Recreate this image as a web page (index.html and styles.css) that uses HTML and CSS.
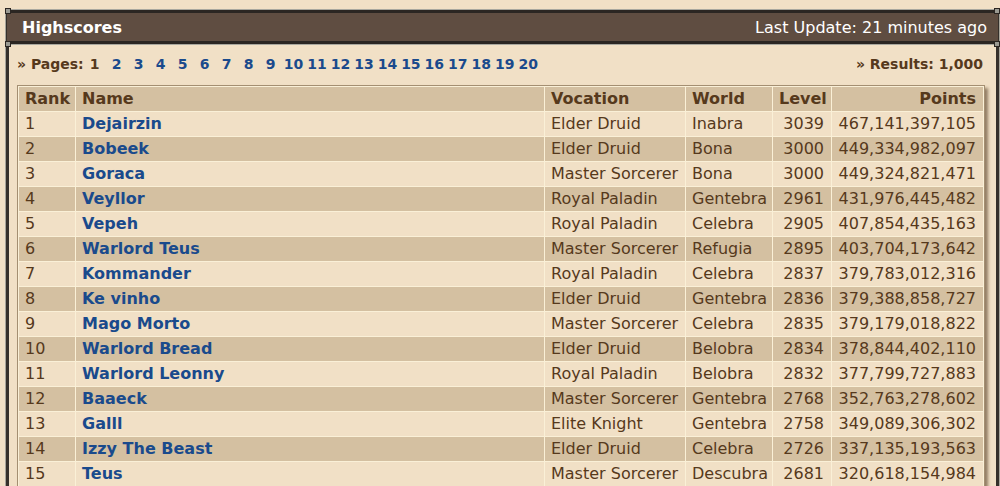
FILE: index.html
```html
<!DOCTYPE html>
<html>
<head>
<meta charset="utf-8">
<title>Highscores</title>
<link rel="stylesheet" href="styles.css">
</head>
<body>
<div class="box">
  <div class="hdr">
    <span class="nub nub-tl"></span><span class="nub nub-bl"></span>
    <span class="nub nub-tr"></span><span class="nub nub-br"></span>
    <div class="hdr-in">
      <span class="hdr-title">Highscores</span>
      <span class="hdr-upd">Last Update: 21 minutes ago</span>
    </div>
  </div>
  <div class="content">
    <div class="pager">
      <div class="pages">
        <span class="lbl">» Pages:</span>
        <span class="pg cur">1</span>
        <a class="pg">2</a><a class="pg">3</a><a class="pg">4</a><a class="pg">5</a><a class="pg">6</a><a class="pg">7</a><a class="pg">8</a><a class="pg">9</a><a class="pg">10</a><a class="pg">11</a><a class="pg">12</a><a class="pg">13</a><a class="pg">14</a><a class="pg">15</a><a class="pg">16</a><a class="pg">17</a><a class="pg">18</a><a class="pg">19</a><a class="pg">20</a>
      </div>
      <div class="results">» Results: 1,000</div>
    </div>
    <div class="tablewrap">
      <table class="hs">
        <colgroup>
          <col class="c-rank"><col class="c-name"><col class="c-voc"><col class="c-world"><col class="c-level"><col class="c-points">
        </colgroup>
        <thead>
          <tr><th>Rank</th><th>Name</th><th>Vocation</th><th>World</th><th class="r">Level</th><th class="r">Points</th></tr>
        </thead>
        <tbody>
          <tr><td>1</td><td><a>Dejairzin</a></td><td>Elder Druid</td><td>Inabra</td><td class="r">3039</td><td class="r">467,141,397,105</td></tr>
          <tr><td>2</td><td><a>Bobeek</a></td><td>Elder Druid</td><td>Bona</td><td class="r">3000</td><td class="r">449,334,982,097</td></tr>
          <tr><td>3</td><td><a>Goraca</a></td><td>Master Sorcerer</td><td>Bona</td><td class="r">3000</td><td class="r">449,324,821,471</td></tr>
          <tr><td>4</td><td><a>Veyllor</a></td><td>Royal Paladin</td><td>Gentebra</td><td class="r">2961</td><td class="r">431,976,445,482</td></tr>
          <tr><td>5</td><td><a>Vepeh</a></td><td>Royal Paladin</td><td>Celebra</td><td class="r">2905</td><td class="r">407,854,435,163</td></tr>
          <tr><td>6</td><td><a>Warlord Teus</a></td><td>Master Sorcerer</td><td>Refugia</td><td class="r">2895</td><td class="r">403,704,173,642</td></tr>
          <tr><td>7</td><td><a>Kommander</a></td><td>Royal Paladin</td><td>Celebra</td><td class="r">2837</td><td class="r">379,783,012,316</td></tr>
          <tr><td>8</td><td><a>Ke vinho</a></td><td>Elder Druid</td><td>Gentebra</td><td class="r">2836</td><td class="r">379,388,858,727</td></tr>
          <tr><td>9</td><td><a>Mago Morto</a></td><td>Master Sorcerer</td><td>Celebra</td><td class="r">2835</td><td class="r">379,179,018,822</td></tr>
          <tr><td>10</td><td><a>Warlord Bread</a></td><td>Elder Druid</td><td>Belobra</td><td class="r">2834</td><td class="r">378,844,402,110</td></tr>
          <tr><td>11</td><td><a>Warlord Leonny</a></td><td>Royal Paladin</td><td>Belobra</td><td class="r">2832</td><td class="r">377,799,727,883</td></tr>
          <tr><td>12</td><td><a>Baaeck</a></td><td>Master Sorcerer</td><td>Gentebra</td><td class="r">2768</td><td class="r">352,763,278,602</td></tr>
          <tr><td>13</td><td><a>Galll</a></td><td>Elite Knight</td><td>Gentebra</td><td class="r">2758</td><td class="r">349,089,306,302</td></tr>
          <tr><td>14</td><td><a>Izzy The Beast</a></td><td>Elder Druid</td><td>Celebra</td><td class="r">2726</td><td class="r">337,135,193,563</td></tr>
          <tr><td>15</td><td><a>Teus</a></td><td>Master Sorcerer</td><td>Descubra</td><td class="r">2681</td><td class="r">320,618,154,984</td></tr>
        </tbody>
      </table>
    </div>
  </div>
</div>
</body>
</html>
```

FILE: styles.css
```css
html, body {
  margin: 0;
  padding: 0;
  overflow: hidden;
  background: #f1e0c6;
  font-family: "DejaVu Sans", Verdana, sans-serif;
  color: #56391c;
}

.box {
  margin: 9px 1px 0 6px;
  border-left: 3px solid #35302b;
  border-right: 3px solid #35302b;
  box-shadow: -1px 0 0 #a7a49a, 1px 0 0 #a7a49a;
  min-height: 600px;
  background: #f1e0c6;
}

.hdr {
  position: relative;
  margin: 0 -2px;
  border-top: 1px solid #a9a89f;
  border-bottom: 1px solid #a9a89f;
}

.hdr-in {
  display: flex;
  justify-content: space-between;
  align-items: center;
  height: 28px;
  padding: 0 11px 0 15px;
  border-top: 3px solid #2b2622;
  border-bottom: 3px solid #2b2622;
  background: #5f4d41;
  color: #ffffff;
  font-size: 16px;
}

.hdr-title {
  font-weight: bold;
}

.nub {
  position: absolute;
  width: 4px;
  height: 4px;
  background: #9b9a92;
  border: 1px solid #2b2622;
}
.nub-tl { left: -2px; top: -2px; }
.nub-bl { left: -2px; bottom: -3px; }
.nub-tr { right: -2px; top: -2px; }
.nub-br { right: -2px; bottom: -3px; }

.content {
  padding: 9px 11px 0 8px;
}

.pager {
  display: flex;
  justify-content: space-between;
  align-items: center;
  height: 20px;
  font-size: 14px;
  font-weight: bold;
  margin-bottom: 11px;
}

.pages {
  display: flex;
  align-items: center;
}

.lbl {
  margin-right: 2px;
}

.pg {
  display: inline-block;
  min-width: 18px;
  margin-right: 4px;
  text-align: center;
  color: #1a4a8c;
}

.pg.cur {
  color: #56391c;
}

.results {
  margin-right: 2px;
}

.tablewrap {
  box-shadow: 3px 3px 3px rgba(70, 45, 20, 0.55);
}

.hs {
  width: 100%;
  table-layout: fixed;
  border: 1px solid #a48f72;
  border-spacing: 1px;
  background: #faf0d7;
  font-size: 16px;
}

.c-rank { width: 56px; }
.c-name { width: 468px; }
.c-voc { width: 140px; }
.c-world { width: 86px; }
.c-level { width: 58px; }
.c-points { width: 151px; }

.hs th, .hs td {
  padding: 0 7px 0 6px;
  text-align: left;
  white-space: nowrap;
  overflow: hidden;
}

.hs th {
  line-height: 24px;
  background: #d4c0a1;
  font-weight: bold;
}

.hs td {
  line-height: 24px;
}

.hs tbody tr:nth-child(odd) td {
  background: #f1e0c6;
}

.hs tbody tr:nth-child(even) td {
  background: #d4c0a1;
}

.hs .r {
  text-align: right;
}

.hs td a {
  color: #1a4a8c;
  font-weight: bold;
}
```
